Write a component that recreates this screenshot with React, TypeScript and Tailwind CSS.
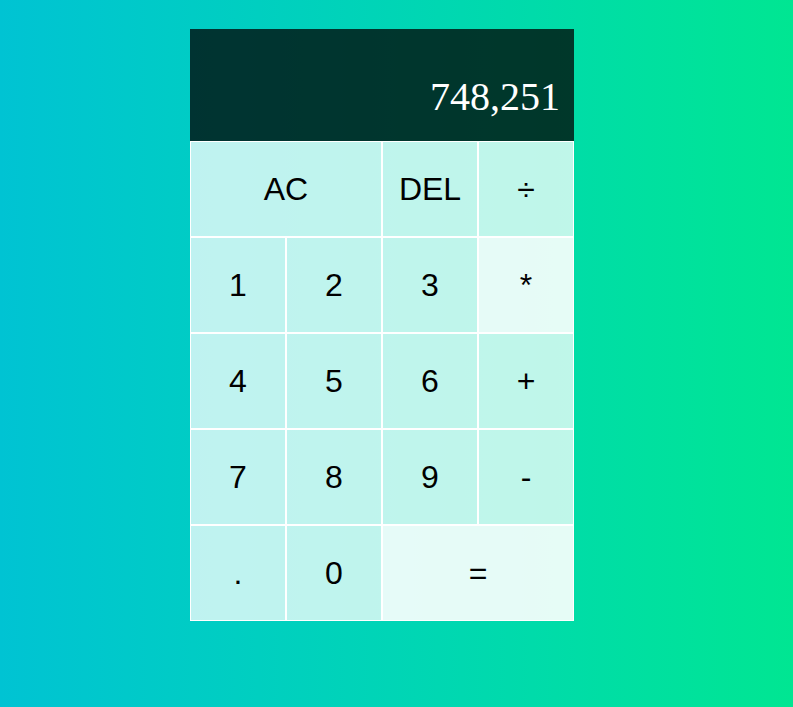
const rows: { label: string; span?: boolean; lit?: boolean }[] = [
  { label: 'AC', span: true },
  { label: 'DEL' },
  { label: '÷' },
  { label: '1' },
  { label: '2' },
  { label: '3' },
  { label: '*', lit: true },
  { label: '4' },
  { label: '5' },
  { label: '6' },
  { label: '+' },
  { label: '7' },
  { label: '8' },
  { label: '9' },
  { label: '-' },
  { label: '.' },
  { label: '0' },
  { label: '=', span: true, lit: true },
];

export default function App() {
  return (
    <div className="min-h-[707px] w-full bg-gradient-to-r from-[#00c3d3] to-[#00e692] pl-[190px] pt-[29px]">
      <div className="grid w-[384px] grid-cols-[repeat(4,96px)] grid-rows-[112px_repeat(5,96px)]">
        <div className="col-span-4 flex flex-col items-end justify-end bg-black/75 pb-[21px] pl-[10px] pr-[14px] break-all">
          <div className="font-['Liberation_Serif',serif] text-[40px] leading-[normal] text-white">
            748,251
          </div>
        </div>
        {rows.map((b, i) => (
          <button
            key={i}
            className={
              'cursor-pointer border border-white font-["Liberation_Sans",Arial,sans-serif] text-[32px] text-black outline-none ' +
              (b.span ? 'col-span-2 ' : '') +
              (b.lit ? 'bg-white/90' : 'bg-white/75')
            }
          >
            {b.label}
          </button>
        ))}
      </div>
    </div>
  );
}
